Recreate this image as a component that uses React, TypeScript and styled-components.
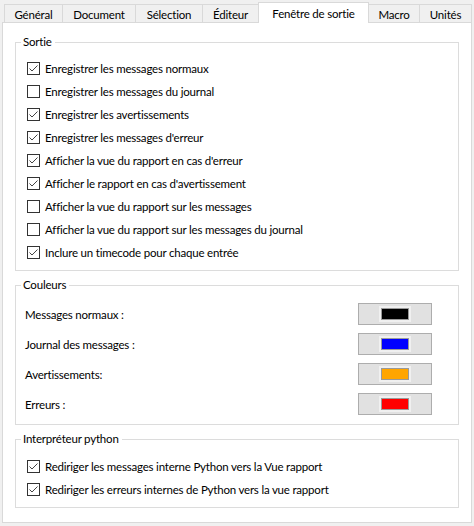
import React from 'react';
import styled, { createGlobalStyle } from 'styled-components';

const Global = createGlobalStyle`
  html, body { margin: 0; padding: 0; background: #f0f0f0; }
  body { font-family: Lato, "Noto Sans", sans-serif; font-size: 11.5px; letter-spacing: -0.2px; color: #000; }
`;

const Window = styled.div`
  width: 474px;
  height: 526px;
  box-sizing: border-box;
  padding: 2px 2px 3px 2px;
  display: flex;
  flex-direction: column;
  background: #f0f0f0;
`;

const TabBar = styled.div`
  display: flex;
  align-items: flex-end;
  height: 20px;
  padding-left: 2px;
  position: relative;
  z-index: 1;
`;

const Tab = styled.div<{ $w: number; $active?: boolean }>`
  box-sizing: border-box;
  width: ${(p) => p.$w}px;
  height: ${(p) => (p.$active ? 21 : 18)}px;
  margin-bottom: ${(p) => (p.$active ? -1 : 0)}px;
  margin-left: -1px;
  &:first-child { margin-left: 0; }
  border: 1px solid #d9d9d9;
  border-bottom: none;
  background: ${(p) => (p.$active ? '#fff' : '#f0f0f0')};
  display: flex;
  align-items: center;
  justify-content: center;
  padding-top: ${(p) => (p.$active ? 0 : 1)}px;
  white-space: nowrap;
  position: relative;
  z-index: ${(p) => (p.$active ? 2 : 1)};
`;

const Panel = styled.div`
  flex: 1;
  background: #fff;
  border: 1px solid #d9d9d9;
  padding: 11px 12px 0 12px;
  display: flex;
  flex-direction: column;
`;

const Group = styled.fieldset`
  margin: 0 0 6px;
  padding: 0;
  border: 1px solid #dcdcdc;
  min-width: 0;
`;

const Legend = styled.legend`
  margin-left: 5px;
  padding: 0 3px 0 2px;
  line-height: 16px;
`;

const GroupBody = styled.div<{ $pt: number; $pb: number }>`
  display: flex;
  flex-direction: column;
  padding-top: ${(p) => p.$pt}px;
  padding-bottom: ${(p) => p.$pb}px;
`;

const CheckRow = styled.label`
  display: flex;
  align-items: center;
  height: 23px;
  padding-left: 11px;
  gap: 5px;
  white-space: nowrap;
`;

const Box = styled.span`
  box-sizing: border-box;
  width: 13px;
  height: 13px;
  border: 1px solid #333;
  background: #fff;
  display: flex;
  flex: none;
`;

const ColorRow = styled.div`
  display: flex;
  align-items: center;
  justify-content: space-between;
  height: 30px;
  padding: 0 26px 0 9px;
`;

const ColorButton = styled.div`
  box-sizing: border-box;
  width: 74px;
  height: 22px;
  background: #e1e1e1;
  border: 1px solid #adadad;
  display: flex;
  align-items: center;
  justify-content: center;
`;

const SwatchWell = styled.span`
  background: #f0f0f0;
  padding: 2px;
  display: flex;
`;

const Swatch = styled.span<{ $c: string }>`
  box-sizing: border-box;
  width: 28px;
  height: 12px;
  border: 1px solid #999;
  background: ${(p) => p.$c};
`;

function Check({ checked, label }: { checked: boolean; label: string }) {
  return (
    <CheckRow>
      <Box>
        {checked && (
          <svg width="11" height="11" viewBox="0 0 11 11">
            <polyline points="1.5,5.5 4,8 9.5,2.5" fill="none" stroke="#444" strokeWidth="1" />
          </svg>
        )}
      </Box>
      <span>{label}</span>
    </CheckRow>
  );
}

const tabs: [string, number][] = [
  ['Général', 59],
  ['Document', 74],
  ['Sélection', 68],
  ['Éditeur', 57],
  ['Fenêtre de sortie', 111],
  ['Macro', 52],
  ['Unités', 53],
];

const sortie: [string, boolean][] = [
  ['Enregistrer les messages normaux', true],
  ['Enregistrer les messages du journal', false],
  ['Enregistrer les avertissements', true],
  ["Enregistrer les messages d'erreur", true],
  ["Afficher la vue du rapport en cas d'erreur", true],
  ["Afficher le rapport en cas d'avertissement", true],
  ['Afficher la vue du rapport sur les messages', false],
  ['Afficher la vue du rapport sur les messages du journal', false],
  ['Inclure un timecode pour chaque entrée', true],
];

const couleurs: [string, string][] = [
  ['Messages normaux :', '#000000'],
  ['Journal des messages :', '#0000ff'],
  ['Avertissements:', '#ffa500'],
  ['Erreurs :', '#ff0000'],
];

export default function App() {
  return (
    <>
      <Global />
      <Window>
        <TabBar>
          {tabs.map(([t, w]) => (
            <Tab key={t} $w={w} $active={t === 'Fenêtre de sortie'}>
              {t}
            </Tab>
          ))}
        </TabBar>
        <Panel>
          <Group>
            <Legend>Sortie</Legend>
            <GroupBody $pt={7} $pb={6}>
              {sortie.map(([l, c]) => (
                <Check key={l} label={l} checked={c} />
              ))}
            </GroupBody>
          </Group>
          <Group>
            <Legend>Couleurs</Legend>
            <GroupBody $pt={6} $pb={5}>
              {couleurs.map(([l, c]) => (
                <ColorRow key={l}>
                  <span>{l}</span>
                  <ColorButton>
                    <SwatchWell>
                      <Swatch $c={c} />
                    </SwatchWell>
                  </ColorButton>
                </ColorRow>
              ))}
            </GroupBody>
          </Group>
          <Group>
            <Legend>Interpréteur python</Legend>
            <GroupBody $pt={8} $pb={6}>
              <Check checked label="Rediriger les messages interne Python vers la Vue rapport" />
              <Check checked label="Rediriger les erreurs internes de Python vers la vue rapport" />
            </GroupBody>
          </Group>
        </Panel>
      </Window>
    </>
  );
}
